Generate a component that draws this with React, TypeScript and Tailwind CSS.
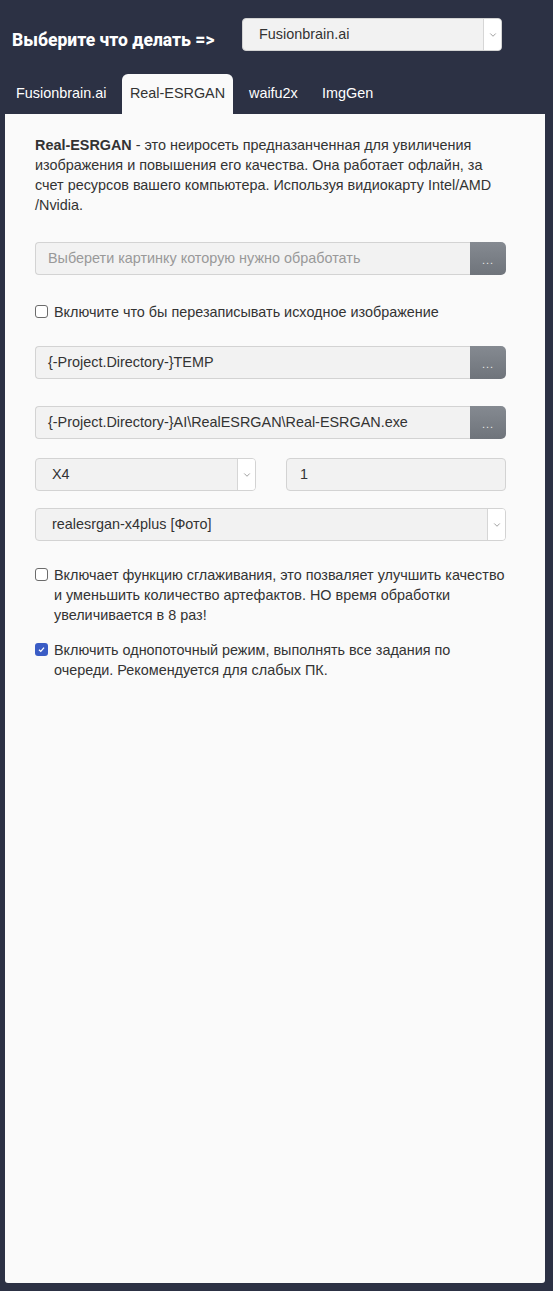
import { ChevronDown } from "lucide-react";

function Arrow() {
  return (
    <div className="flex w-[18px] items-center justify-center self-stretch border-l border-[#d6d6d6] bg-white rounded-r-[3px]">
      <ChevronDown size={10} strokeWidth={1.5} className="text-[#666]" />
    </div>
  );
}

function Select({ value, className = "" }: { value: string; className?: string }) {
  return (
    <div
      className={`flex h-[33px] items-stretch rounded-[4px] border border-[#d3d3d3] bg-[#f2f2f2] ${className}`}
    >
      <div className="flex flex-1 items-center pl-[16px] text-[14.4px] text-[#333]">{value}</div>
      <Arrow />
    </div>
  );
}

function PathInput({ value, placeholder }: { value?: string; placeholder?: string }) {
  return (
    <div className="flex h-[33px] items-stretch">
      <div className="flex flex-1 items-center rounded-l-[4px] border border-r-0 border-[#d3d3d3] bg-[#f2f2f2] pl-[12px] text-[14.4px]">
        {value ? (
          <span className="text-[#333]">{value}</span>
        ) : (
          <span className="text-[#999]">{placeholder}</span>
        )}
      </div>
      <div className="flex w-[36px] items-center justify-center rounded-r-[5px] bg-gradient-to-b from-[#858a91] to-[#6f747b] pt-[4px] text-[11px] tracking-[1px] text-[#e8e8e8]">
        ...
      </div>
    </div>
  );
}

function Check({ checked, children }: { checked?: boolean; children: React.ReactNode }) {
  return (
    <div className="flex gap-[6px] text-[14.4px] leading-[20px] text-[#333]">
      {checked ? (
        <span className="mt-[3px] flex h-[13px] w-[13px] shrink-0 items-center justify-center rounded-[3px] bg-[#3a5cc5]">
          <svg width="9" height="9" viewBox="0 0 9 9">
            <path d="M2 4.7 L3.8 6.4 L7 2.6" fill="none" stroke="white" strokeWidth="1.3" />
          </svg>
        </span>
      ) : (
        <span className="mt-[3px] h-[13px] w-[13px] shrink-0 rounded-[3px] border border-[#6b6b6b] bg-white" />
      )}
      <span>{children}</span>
    </div>
  );
}

export default function App() {
  return (
    <div
      className="min-h-[1291px] bg-[#2c3144] pb-[8px]"
      style={{ fontFamily: '"Liberation Sans", Arial, sans-serif' }}
    >
      <div className="flex h-[51px] items-start pt-[18px]">
        <h1
          className="mt-[12px] ml-[12px] w-[230px] text-[17.5px] leading-[20px] font-extrabold text-white"
          style={{ fontFamily: "Roboto, sans-serif" }}
        >
          Выберите что делать =&gt;
        </h1>
        <Select value="Fusionbrain.ai" className="w-[260px]" />
      </div>

      <div className="mt-[23px] ml-[5px] flex h-[40px] items-end gap-[4px] text-[14.4px]">
        <div className="flex h-[40px] w-[113px] items-center pl-[11px] text-white">
          Fusionbrain.ai
        </div>
        <div className="flex h-[40px] w-[111px] items-center justify-center rounded-t-[6px] bg-[#fafafa] text-[#333]">
          Real-ESRGAN
        </div>
        <div className="flex h-[40px] w-[73px] items-center pl-[12px] text-white">waifu2x</div>
        <div className="flex h-[40px] items-center pl-[8px] text-white">ImgGen</div>
      </div>

      <div className="mr-[8px] ml-[5px] h-[1169px] rounded-b-[3px] bg-[#fafafa] pt-[21px] pr-[39px] pl-[30px]">
        <p className="text-[14.4px] leading-[20px] text-[#333]">
          <b>Real-ESRGAN</b> - это неиросеть предназанченная для увиличения изображения и
          повышения его качества. Она работает офлайн, за счет ресурсов вашего компьютера.
          Используя видиокарту Intel/AMD /Nvidia.
        </p>

        <div className="mt-[27px]">
          <PathInput placeholder="Выберети картинку которую нужно обработать" />
        </div>

        <div className="mt-[27px]">
          <Check>Включите что бы перезаписывать исходное изображение</Check>
        </div>

        <div className="mt-[24px]">
          <PathInput value="{-Project.Directory-}TEMP" />
        </div>

        <div className="mt-[27px]">
          <PathInput value="{-Project.Directory-}AI\RealESRGAN\Real-ESRGAN.exe" />
        </div>

        <div className="mt-[19px] flex gap-[30px]">
          <Select value="X4" className="w-[221px]" />
          <div className="flex h-[33px] flex-1 items-center rounded-[4px] border border-[#d3d3d3] bg-[#f2f2f2] pl-[13px] text-[14.4px] text-[#333]">
            1
          </div>
        </div>

        <div className="mt-[17px]">
          <Select value="realesrgan-x4plus [Фото]" />
        </div>

        <div className="mt-[24px]">
          <Check>
            Включает функцию сглаживания, это позваляет улучшить качество и уменьшить
            количество артефактов. НО время обработки увеличивается в 8 раз!
          </Check>
        </div>

        <div className="mt-[15px]">
          <Check checked>
            Включить однопоточный режим, выполнять все задания по очереди. Рекомендуется для
            слабых ПК.
          </Check>
        </div>
      </div>
    </div>
  );
}
